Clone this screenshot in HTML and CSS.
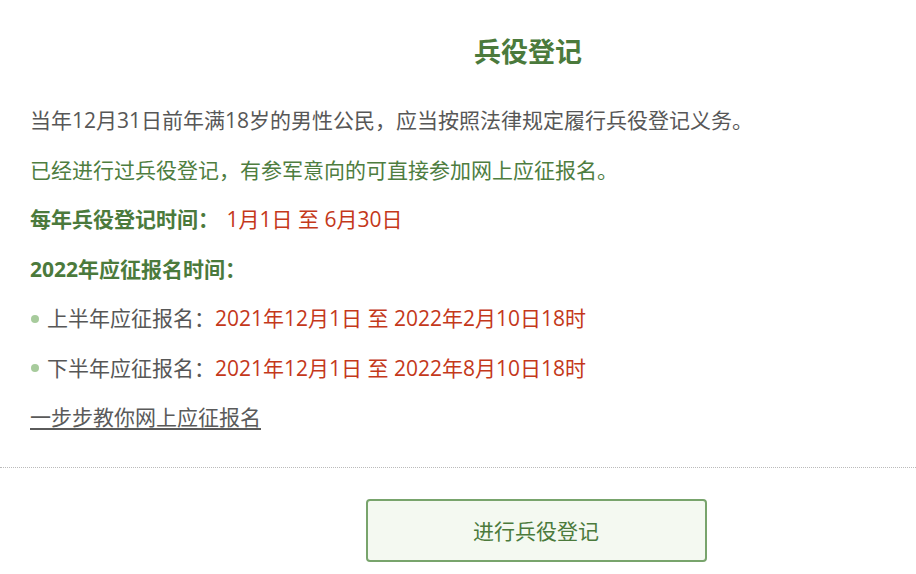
FILE: index.html
```html
<!DOCTYPE html>
<html lang="zh-CN">
<head>
    <meta charset="UTF-8">
    <meta name="viewport" content="width=device-width, initial-scale=1.0">
    <title>兵役登记</title>
    <link rel="stylesheet" href="styles.css">
</head>
<body>

<div class="page">
    <h2 class="title">兵役登记</h2>
    <div class="info">
        <p class="muted">当年12月31日前年满18岁的男性公民，应当按照法律规定履行兵役登记义务。</p>
        <p class="green">已经进行过兵役登记，有参军意向的可直接参加网上应征报名。</p>
        <p><b class="label">每年兵役登记时间：</b> <span class="date">1月1日 至 6月30日</span></p>
        <p><b class="label">2022年应征报名时间：</b></p>
        <p class="dot">上半年应征报名：<span class="date">2021年12月1日 至 2022年2月10日18时</span></p>
        <p class="dot">下半年应征报名：<span class="date">2021年12月1日 至 2022年8月10日18时</span></p>
        <p><a href="#" class="guide">一步步教你网上应征报名</a></p>
    </div>
    <div class="actions">
        <button type="button" class="btn-register">进行兵役登记</button>
    </div>
</div>

</body>
</html>
```

FILE: styles.css
```css
body {
    margin: 0;
    font-family: "Open Sans", "Noto Sans CJK SC", sans-serif;
    background: #fff;
}
.title {
    margin: 31px 0 0;
    padding-left: 140px;
    font-family: "Noto Sans CJK SC", sans-serif;
    font-size: 27px;
    line-height: 40px;
    font-weight: bold;
    color: #4b7a3c;
    text-align: center;
}
.info {
    padding: 34px 30px 33px;
    border-bottom: 1px dotted #bbb;
}
.info p {
    margin: 0 0 18px;
    font-size: 21px;
    line-height: 31.5px;
    color: #575757;
}
.info p:last-child {
    margin-bottom: 0;
}
.info p.green {
    color: #4e7d3f;
}
.label {
    color: #4b7a3c;
    font-weight: bold;
}
.label + .date {
    margin-left: 2px;
}
.date {
    color: #c4381a;
}
.dot {
    display: flex;
    align-items: center;
}
.dot::before {
    content: "";
    width: 8px;
    height: 8px;
    border-radius: 50%;
    background: #a7cb9c;
    margin: 0 8px 0 1px;
}
.guide {
    color: #5a5a5a;
    text-decoration: underline;
    text-decoration-thickness: 2px;
    text-underline-offset: 3px;
}
.actions {
    display: flex;
    justify-content: center;
    padding: 31px 0 0 156px;
}
.btn-register {
    width: 341px;
    height: 63px;
    background: #f4f9f1;
    border: 2px solid #78a46c;
    border-radius: 4px;
    color: #4b7a3c;
    font-family: inherit;
    font-size: 21px;
    cursor: pointer;
}
.btn-register:hover {
    background: #e8f2e3;
}
```
